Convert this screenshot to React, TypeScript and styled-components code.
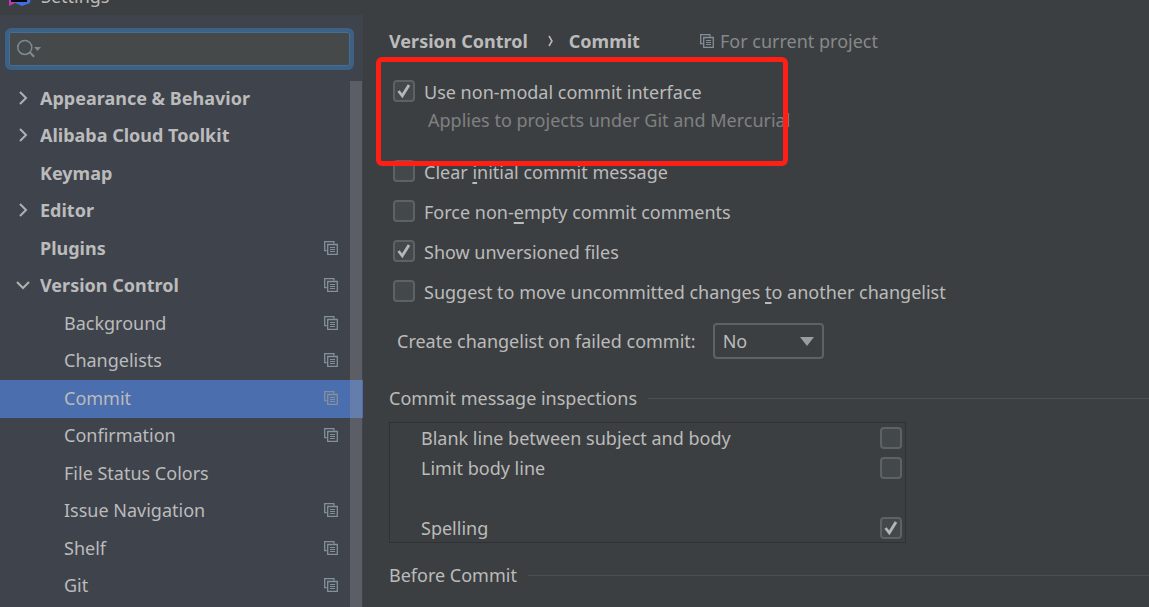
import React, { ReactNode, useState } from "react";
import styled, { createGlobalStyle } from "styled-components";

const GlobalStyle = createGlobalStyle`
  * { box-sizing: border-box; }
  body {
    margin: 0;
    background: #3c3f41;
    color: #bbbbbb;
    font: 18px/24px "Noto Sans", "Open Sans", sans-serif;
  }
  button, input, select { font: inherit; color: inherit; }
`;

const Window = styled.div`
  display: flex;
  flex-direction: column;
  height: 100vh;
  overflow: hidden;
`;

const TitleBar = styled.header`
  display: flex;
  align-items: flex-end;
  flex: none;
  gap: 9px;
  height: 15px;
  padding: 0 8px 7px;
  overflow: hidden;
`;

const Body = styled.div`
  display: flex;
  flex: 1;
  min-height: 0;
`;

const Sidebar = styled.aside`
  flex: none;
  display: flex;
  flex-direction: column;
  width: 363px;
  background: #3f434c;
`;

const SearchBox = styled.label`
  display: flex;
  align-items: center;
  flex: none;
  height: 42px;
  margin: 13px 9px 10px 5px;
  padding: 0 8px;
  border: 4px solid #3d6185;
  border-radius: 6px;
  outline: 1px solid #466d94;
  outline-offset: -5px;
  background: #45494a;
`;

const SearchInput = styled.input`
  flex: 1;
  min-width: 0;
  border: 0;
  padding: 0;
  outline: 0;
  background: transparent;
`;

const TreeArea = styled.nav`
  position: relative;
  flex: 1;
  min-height: 0;
  overflow: hidden;
`;

const Tree = styled.ul`
  margin: 0;
  padding: 0;
  list-style: none;
`;

const TreeItem = styled.li`
  height: 37px;
  &:nth-child(odd) { height: 38px; }
`;

const TreeButton = styled.button<{ $child?: boolean; $selected?: boolean }>`
  display: flex;
  align-items: center;
  width: 100%;
  height: 100%;
  border: 0;
  padding: 0 25px 3px ${p => (p.$child ? 64 : 16)}px;
  background: ${p => (p.$selected ? "#4b6eaf" : "transparent")};
  font-weight: ${p => (p.$child ? 400 : 700)};
  text-align: left;
`;

const Twisty = styled.span`
  display: flex;
  width: 24px;
`;

const TreeText = styled.span`
  flex: 1;
`;

const ScrollThumb = styled.div`
  position: absolute;
  top: 1px;
  right: 1px;
  bottom: 0;
  width: 12px;
  background: rgba(166, 166, 166, 0.28);
`;

const Main = styled.main`
  position: relative;
  flex: 1;
  min-width: 0;
  padding: 14px 0 0 26px;
`;

const Breadcrumbs = styled.nav`
  display: flex;
  align-items: center;
  height: 24px;
  font-weight: 700;
`;

const Crumb = styled.a`
  color: inherit;
  text-decoration: none;
`;

const CrumbArrow = styled.span`
  display: flex;
  justify-content: center;
  width: 41px;
  padding-left: 6px;
`;

const Scope = styled.span`
  display: flex;
  align-items: center;
  gap: 6px;
  margin-left: 60px;
  color: #87898a;
  font-weight: 400;
`;

const Options = styled.div`
  display: flex;
  flex-direction: column;
  gap: 16px;
  padding: 26px 0 0 4px;
`;

const OptionRow = styled.label`
  display: flex;
  align-items: center;
  gap: 9px;
  height: 24px;
  white-space: nowrap;
`;

const OptionText = styled.span`
  padding-top: 2px;
`;

const Hint = styled.p`
  margin: -11px 0 11px 35px;
  color: #7f8182;
  white-space: nowrap;
`;

const Mnemonic = styled.u`
  text-decoration-thickness: 2px;
  text-underline-offset: 3px;
`;

const CheckWrap = styled.span`
  display: grid;
  flex: none;
  width: 22px;
  height: 22px;
  > * { grid-area: 1 / 1; }
  > svg { pointer-events: none; }
`;

const CheckInput = styled.input`
  appearance: none;
  width: 22px;
  height: 22px;
  margin: 0;
  border: 2px solid #5f6263;
  border-radius: 4px;
  background: #43494a;
`;

const SelectRow = styled.div`
  display: flex;
  align-items: center;
  gap: 17px;
  height: 36px;
  margin: 20px 0 27px 8px;
  white-space: nowrap;
`;

const SelectWrap = styled.span`
  display: grid;
  align-items: center;
  width: 111px;
  > * { grid-area: 1 / 1; }
  > svg { justify-self: end; margin-right: 10px; pointer-events: none; }
`;

const Select = styled.select`
  appearance: none;
  height: 36px;
  padding: 0 8px;
  border: 2px solid #5f6263;
  border-radius: 4px;
  background: #3c3f41;
`;

const SectionTitle = styled.h2`
  display: flex;
  align-items: center;
  gap: 11px;
  height: 24px;
  margin: 0;
  font-size: 18px;
  font-weight: 400;
  white-space: nowrap;
  &::after {
    content: "";
    flex: 1;
    height: 1px;
    background: #4d5052;
  }
`;

const Inspections = styled.div`
  width: 517px;
  max-width: 100%;
  height: 121px;
  margin: 12px 0 20px;
  border: 1px solid #2f3132;
`;

const InspectionRow = styled.label`
  display: flex;
  align-items: center;
  justify-content: space-between;
  height: 30px;
  padding: 0 3px 0 31px;
`;

const InspectionGap = styled.div`
  height: 30px;
`;

const Highlight = styled.div`
  position: absolute;
  top: 42px;
  left: 13px;
  width: 412px;
  height: 109px;
  border: 5px solid #ff1f14;
  border-radius: 6px;
  pointer-events: none;
`;

const AppLogo = () => (
  <svg width="24" height="24" viewBox="0 0 24 24" aria-hidden="true">
    <path d="M1 3 12 0 7 19 1 22z" fill="#c234b8" />
    <path d="M10 0 24 7 22 19 14 22 7 19z" fill="#3f6fe0" />
    <path d="M3 0h16v18H3z" fill="#07070b" />
    <path d="M5 15h7v1H5z" fill="#dddddd" />
  </svg>
);

const SearchIcon = () => (
  <svg width="26" height="20" viewBox="0 0 26 20" fill="none" aria-hidden="true">
    <circle cx="7.8" cy="8.4" r="7" stroke="#7d8a95" strokeWidth="1.5" />
    <path d="m12.5 13 4.6 4.8" stroke="#7d8a95" strokeWidth="2.2" />
    <path d="M17 8h7l-3.500 4z" fill="#7d8a95" />
  </svg>
);

const ProjectIcon = () => (
  <svg width="14" height="14" viewBox="0 0 14 14" fill="none" stroke="#84909a" aria-hidden="true">
    <path d="M2.800 9.700H.700V.700h9.200v2" strokeWidth="1.300" />
    <path d="M3.700 3.500h9.600v9.800H3.700z" strokeWidth="1.300" />
    <path d="M6 6.500h5M6 8.500h5M6 10.500h5" />
  </svg>
);

const Chevron = ({ open }: { open?: boolean }) => (
  <svg width="14" height="16" viewBox="0 0 14 16" fill="none" stroke="#afb1b3" strokeWidth="2" aria-hidden="true">
    <path d={open ? "M1 5l6 6 6-6" : "M4 2l6 6-6 6"} />
  </svg>
);

const Tick = () => (
  <svg width="22" height="22" viewBox="0 0 22 22" fill="none" stroke="#b4b6b7" strokeWidth="2.800" aria-hidden="true">
    <path d="m5.500 11 3.800 4.800L16 5" />
  </svg>
);

function CheckBox({ initial = false }: { initial?: boolean }) {
  const [on, setOn] = useState(initial);
  return (
    <CheckWrap>
      <CheckInput type="checkbox" checked={on} onChange={e => setOn(e.target.checked)} />
      {on && <Tick />}
    </CheckWrap>
  );
}

const Option = ({ checked, children }: { checked?: boolean; children: ReactNode }) => (
  <OptionRow>
    <CheckBox initial={checked} />
    <OptionText>{children}</OptionText>
  </OptionRow>
);

const Inspection = ({ name, checked }: { name: string; checked?: boolean }) => (
  <InspectionRow>
    {name}
    <CheckBox initial={checked} />
  </InspectionRow>
);

type Node = { name: string; child?: boolean; twisty?: "open" | "closed"; project?: boolean };

const nodes: Node[] = [
  { name: "Appearance & Behavior", twisty: "closed" },
  { name: "Alibaba Cloud Toolkit", twisty: "closed" },
  { name: "Keymap" },
  { name: "Editor", twisty: "closed" },
  { name: "Plugins", project: true },
  { name: "Version Control", twisty: "open", project: true },
  { name: "Background", child: true, project: true },
  { name: "Changelists", child: true, project: true },
  { name: "Commit", child: true, project: true },
  { name: "Confirmation", child: true, project: true },
  { name: "File Status Colors", child: true },
  { name: "Issue Navigation", child: true, project: true },
  { name: "Shelf", child: true, project: true },
  { name: "Git", child: true, project: true },
];

export default function App() {
  const [selected, setSelected] = useState("Commit");
  return (
    <>
      <GlobalStyle />
      <Window>
        <TitleBar>
          <AppLogo />
          <span>Settings</span>
        </TitleBar>
        <Body>
          <Sidebar>
            <SearchBox>
              <SearchIcon />
              <SearchInput type="text" aria-label="Search settings" />
            </SearchBox>
            <TreeArea aria-label="Settings categories">
              <Tree>
                {nodes.map(n => (
                  <TreeItem key={n.name}>
                    <TreeButton
                      type="button"
                      $child={n.child}
                      $selected={n.name === selected}
                      onClick={() => setSelected(n.name)}
                    >
                      {!n.child && <Twisty>{n.twisty && <Chevron open={n.twisty === "open"} />}</Twisty>}
                      <TreeText>{n.name}</TreeText>
                      {n.project && <ProjectIcon />}
                    </TreeButton>
                  </TreeItem>
                ))}
              </Tree>
              <ScrollThumb />
            </TreeArea>
          </Sidebar>
          <Main>
            <Breadcrumbs aria-label="Breadcrumb">
              <Crumb href="#version-control">Version Control</Crumb>
              <CrumbArrow>
                <svg width="6" height="12" viewBox="0 0 6 12" fill="none" stroke="#bbbbbb" strokeWidth="1.500" aria-hidden="true">
                  <path d="m1 1 3 5-3 5" />
                </svg>
              </CrumbArrow>
              <Crumb href="#commit">Commit</Crumb>
              <Scope>
                <ProjectIcon />
                For current project
              </Scope>
            </Breadcrumbs>
            <Options>
              <Option checked>Use non-modal commit interface</Option>
              <Hint>Applies to projects under Git and Mercurial</Hint>
              <Option>Clear <Mnemonic>i</Mnemonic>nitial commit message</Option>
              <Option>Force non-<Mnemonic>e</Mnemonic>mpty commit comments</Option>
              <Option checked>Show unversioned files</Option>
              <Option>Suggest to move uncommitted changes <Mnemonic>t</Mnemonic>o another changelist</Option>
            </Options>
            <SelectRow>
              <label htmlFor="failed-commit">Create changelist on failed commit:</label>
              <SelectWrap>
                <Select id="failed-commit" defaultValue="No">
                  <option>Yes</option>
                  <option>No</option>
                  <option>Ask</option>
                </Select>
                <svg width="14" height="9" viewBox="0 0 14 9" aria-hidden="true">
                  <path d="M0 0h14L7 9z" fill="#9a9da0" />
                </svg>
              </SelectWrap>
            </SelectRow>
            <SectionTitle>Commit message inspections</SectionTitle>
            <Inspections>
              <Inspection name="Blank line between subject and body" />
              <Inspection name="Limit body line" />
              <InspectionGap />
              <Inspection name="Spelling" checked />
            </Inspections>
            <SectionTitle>Before Commit</SectionTitle>
            <Highlight />
          </Main>
        </Body>
      </Window>
    </>
  );
}
